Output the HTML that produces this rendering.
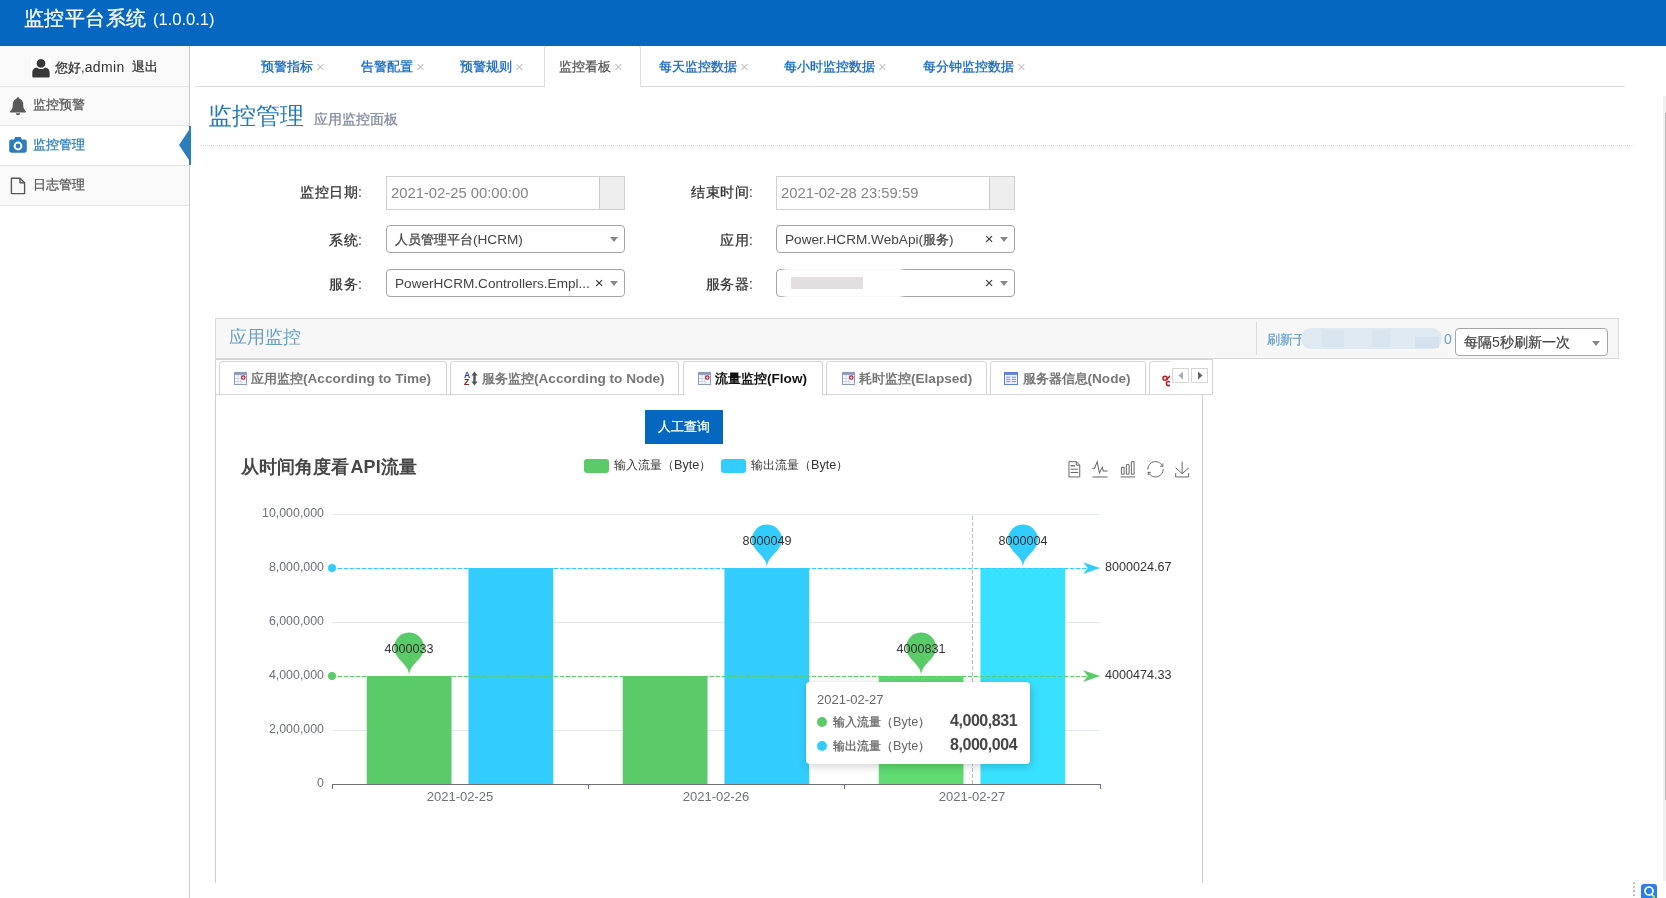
<!DOCTYPE html>
<html lang="zh">
<head>
<meta charset="utf-8">
<title>监控平台系统</title>
<style>
*{box-sizing:border-box;margin:0;padding:0}
html,body{width:1666px;height:898px;overflow:hidden;background:#fff}
body{font-family:"Liberation Sans",sans-serif;font-size:13px;color:#393939;position:relative}
.abs{position:absolute}
.w{display:inline-block;white-space:nowrap;overflow:visible;text-align:justify;text-align-last:justify;text-justify:inter-character;-webkit-text-stroke:.28px currentColor}
.t{position:absolute;white-space:nowrap;line-height:1}
/* header */
#navbar{left:0;top:0;width:1666px;height:46px;background:#0667c1;z-index:5}
#brand{z-index:6}
#brand{left:24px;top:7px;font-size:20px;color:#fff;line-height:22px}
#brand small{font-size:16.5px}
/* sidebar */
#sidebar{left:0;top:46px;width:190px;height:852px;border-right:1px solid #ccc;background:#fff}
.srow{position:absolute;left:0;width:189px;background:#f9f9f9;border-bottom:1px solid #e5e5e5}
.srow.act{background:#fff}
.mtxt{position:absolute;left:33px;font-size:13px;line-height:16px;color:#585858;white-space:nowrap}
/* top tabs */
.toptab{position:absolute;top:57.5px;font-size:13px;line-height:16px;color:#1166c0;white-space:nowrap}
.toptab i{font-style:normal;color:#c4c4c4;font-size:15px;margin-left:3px;position:relative;top:1px}
</style>
</head>
<body>
<div id="root" style="position:absolute;left:0;top:0;width:1666px;height:898px;overflow:hidden;will-change:transform;">
<!-- ======= NAVBAR ======= -->
<div id="navbar" class="abs"></div>
<div id="brand" class="t"><span class="w" style="width:122px;letter-spacing:.45px">监控平台系统</span><span class="w" style="width:7px"></span><small>(1.0.0.1)</small></div>

<!-- ======= SIDEBAR ======= -->
<div id="sidebar" class="abs">
  <div class="srow" style="top:0;height:41px"></div>
  <div class="srow" style="top:41px;height:39px"></div>
  <div class="srow act" style="top:80px;height:40px"></div>
  <div class="srow" style="top:120px;height:40px"></div>
</div>
<!-- user row -->
<div class="abs" style="left:31px;top:58px;width:20px;height:20px;background:#fff"></div>
<svg class="abs" style="left:31px;top:58px" width="20" height="20" viewBox="0 0 20 20"><path d="M1.3,18 V14.6 C1.3,11.2 3.6,9.6 6,9.4 C8,11.4 12,11.4 14,9.4 C16.4,9.6 18.7,11.2 18.7,14.6 V18 C18.7,19 18.1,19.5 17.2,19.5 H2.8 C1.9,19.5 1.3,19 1.3,18Z" fill="#383838"/><circle cx="10" cy="5.4" r="4.7" fill="#383838" stroke="#fff" stroke-width=".7"/></svg>
<div class="t" style="left:55px;top:59px;font-size:13px;line-height:16px;color:#333"><span class="w" style="width:26px">您好</span>,<span style="font-size:14px;letter-spacing:.4px">admin</span></div>
<div class="t" style="left:132px;top:59px;font-size:13px;line-height:16px;color:#333"><span class="w" style="width:26px">退出</span></div>
<!-- menu 1 -->
<svg class="abs" style="left:9px;top:96px" width="18" height="20" viewBox="0 0 18 20"><path d="M9,1.2 C9.9,1.2 10.3,1.9 10.2,2.6 C13.2,3.4 14.2,6.2 14.2,9 C14.2,12.2 15.4,14 17,15.4 C17,16 16.6,16.4 16,16.4 H2 C1.4,16.4 1,16 1,15.4 C2.6,14 3.8,12.2 3.8,9 C3.8,6.2 4.8,3.4 7.8,2.6 C7.7,1.9 8.1,1.2 9,1.2Z M6.9,17.2 H11.1 C11.1,18.4 10.2,19.2 9,19.2 C7.8,19.2 6.9,18.4 6.9,17.2Z" fill="#585858"/></svg>
<div class="mtxt" style="top:97px"><span class="w" style="width:52px">监控预警</span></div>
<!-- menu 2 active -->
<svg class="abs" style="left:9px;top:136px" width="18" height="18" viewBox="0 0 18 18"><path d="M6.2,1 H11.8 L12.9,3.4 H15.6 C16.9,3.4 17.8,4.3 17.8,5.6 V14.6 C17.8,15.9 16.9,16.8 15.6,16.8 H2.4 C1.1,16.8 0.2,15.9 0.2,14.6 V5.6 C0.2,4.3 1.1,3.4 2.4,3.4 H5.1Z M9,5.6 A4.4,4.4 0 1 0 9,14.4 A4.4,4.4 0 1 0 9,5.6Z M9,7.6 A2.4,2.4 0 1 1 9,12.4 A2.4,2.4 0 1 1 9,7.6Z" fill="#2b7dbc" fill-rule="evenodd"/></svg>
<div class="mtxt" style="top:137px;color:#2b7dbc"><span class="w" style="width:52px">监控管理</span></div>
<div class="abs" style="left:189px;top:126px;width:2px;height:39px;background:#2b7dbc"></div>
<svg class="abs" style="left:179px;top:130px" width="10" height="30" viewBox="0 0 10 30"><path d="M10,0 L0,15 L10,30Z" fill="#2b7dbc"/></svg>
<!-- menu 3 -->
<svg class="abs" style="left:10px;top:177px" width="16" height="18" viewBox="0 0 16 18"><path d="M1.4,1.2 H10 L14.6,5.8 V16.6 H1.4Z M10,1.2 V5.8 H14.6" fill="none" stroke="#585858" stroke-width="1.4" stroke-linejoin="round"/></svg>
<div class="mtxt" style="top:177px"><span class="w" style="width:52px">日志管理</span></div>

<!-- ======= TOP TABS ======= -->
<div class="abs" style="left:195px;top:86px;width:1430px;height:1px;background:#ddd"></div>
<div class="abs" style="left:544px;top:45px;width:97px;height:42px;border:1px solid #ddd;border-bottom:none;border-radius:4px 4px 0 0;background:#fff"></div>
<div class="toptab" style="left:261px"><span class="w" style="width:52px">预警指标</span><i>×</i></div>
<div class="toptab" style="left:361px"><span class="w" style="width:52px">告警配置</span><i>×</i></div>
<div class="toptab" style="left:460px"><span class="w" style="width:52px">预警规则</span><i>×</i></div>
<div class="toptab" style="left:559px;color:#555"><span class="w" style="width:52px">监控看板</span><i>×</i></div>
<div class="toptab" style="left:659px"><span class="w" style="width:78px">每天监控数据</span><i>×</i></div>
<div class="toptab" style="left:784px"><span class="w" style="width:91px">每小时监控数据</span><i>×</i></div>
<div class="toptab" style="left:923px"><span class="w" style="width:91px">每分钟监控数据</span><i>×</i></div>

<!-- ======= PAGE HEADER ======= -->
<div class="t" style="left:208px;top:103px;font-size:24px;line-height:26px;color:#2679b5;font-weight:300"><span class="w" style="width:96px;-webkit-text-stroke:0">监控管理</span></div>
<div class="t" style="left:314px;top:111px;font-size:14px;line-height:16px;color:#8089a0"><span class="w" style="width:84px">应用监控面板</span></div>
<div class="abs" style="left:200px;top:145px;width:1434px;height:0;border-top:1px dotted #d8d8d8"></div>

<!-- ======= FORM ======= -->
<style>
.lbl{margin-left:-1px;letter-spacing:0;position:absolute;font-size:14px;line-height:16px;color:#333;white-space:nowrap;text-align:right;width:120px}
.dinp{position:absolute;top:176px;width:239px;height:34px;border:1px solid #d0d0d0;background:#fff}
.dinp b{position:absolute;right:0;top:0;width:25px;height:32px;background:#eee;border-left:1px solid #ccc}
.dinp>span{position:absolute;left:4px;top:8px;font-size:14.8px;line-height:16px;color:#858585;white-space:nowrap;font-weight:normal}
.sel{position:absolute;width:239px;height:28px;border:1px solid #a4a4a4;border-radius:4px;background:#fff}
.sel>span{position:absolute;left:8px;top:6px;font-size:13px;line-height:15px;color:#444;white-space:nowrap}
.sel u{position:absolute;right:6px;top:11px;width:0;height:0;border-style:solid;border-width:5px 4px 0 4px;border-color:#888 transparent transparent transparent}
.sel em{position:absolute;right:20.5px;top:5px;font-style:normal;font-weight:normal;font-size:15px;line-height:16px;color:#333}
</style>
<div class="lbl" style="left:243px;top:184px"><span class="w" style="width:58.0px">监控日期</span>:</div>
<div class="dinp" style="left:386px"><span>2021-02-25 00:00:00</span><b></b></div>
<div class="lbl" style="left:634px;top:184px"><span class="w" style="width:58.0px">结束时间</span>:</div>
<div class="dinp" style="left:776px"><span>2021-02-28 23:59:59</span><b></b></div>

<div class="lbl" style="left:243px;top:232px"><span class="w" style="width:29.0px">系统</span>:</div>
<div class="sel" style="left:386px;top:225px"><span><span class="w" style="width:78px">人员管理平台</span><span style="font-size:13.6px">(HCRM)</span></span><u></u></div>
<div class="lbl" style="left:634px;top:232px"><span class="w" style="width:29.0px">应用</span>:</div>
<div class="sel" style="left:776px;top:225px"><span style="font-size:13.6px">Power.HCRM.WebApi(<span class="w" style="font-size:13px;width:26px">服务</span>)</span><em>×</em><u></u></div>

<div class="lbl" style="left:243px;top:276px"><span class="w" style="width:29.0px">服务</span>:</div>
<div class="sel" style="left:386px;top:269px"><span style="font-size:13.6px">PowerHCRM.Controllers.Empl...</span><em>×</em><u></u></div>
<div class="lbl" style="left:634px;top:276px"><span class="w" style="width:43.5px">服务器</span>:</div>
<div class="sel" style="left:776px;top:269px"><em>×</em><u></u></div>
<!-- blurred/redacted server name -->
<div class="abs" style="left:779px;top:266px;width:128px;height:34px;background:#fff;border-radius:14px;opacity:.93;filter:blur(1.5px)"></div>
<div class="abs" style="left:791px;top:277px;width:72px;height:12px;background:#e2dfe0;filter:blur(.6px)"></div>

<!-- ======= PANEL (widget box) ======= -->
<style>
.etab{position:absolute;top:361px;height:34px;border:1px solid #d4d4d4;border-bottom:1px solid #d4d4d4;background:#fff;border-radius:3px 3px 0 0}
.etab.on{border-bottom-color:#fff;height:35px}
.etab .tx{position:absolute;top:9px;font-size:13px;line-height:16px;font-weight:bold;color:#777;white-space:nowrap}
.etab .tx span.l{font-size:13.6px}
.etab.on .tx{color:#111}
.etab .w{-webkit-text-stroke:0}
.etab svg{position:absolute;top:10px}
</style>
<div class="abs" style="left:215px;top:318px;width:1404px;height:41px;border:1px solid #d9d9d9;background:#f7f7f7"></div>
<div class="t" style="left:229px;top:327px;font-size:18px;line-height:20px;color:#669fc7;font-weight:300"><span class="w" style="width:72px;-webkit-text-stroke:0">应用监控</span></div>
<div class="abs" style="left:1256px;top:322px;width:1px;height:33px;background:#dcdcdc"></div>
<div class="t" style="left:1267px;top:332px;font-size:13px;line-height:16px;color:#6aa3d0"><span class="w" style="width:39px">刷新于</span></div>
<div class="abs" style="left:1301px;top:328px;width:141px;height:21px;background:#dfe9f1;border-radius:10px;filter:blur(.7px)"></div>
<div class="abs" style="left:1322px;top:330px;width:22px;height:17px;background:#d9e5ef;filter:blur(.7px)"></div>
<div class="abs" style="left:1372px;top:330px;width:18px;height:17px;background:#d9e5ef;filter:blur(.7px)"></div>
<div class="abs" style="left:1415px;top:337px;width:24px;height:11px;background:#d5e2ed;filter:blur(.7px)"></div>
<div class="t" style="left:1444px;top:331px;font-size:14px;line-height:16px;color:#6aa3d0">0</div>
<div class="sel" style="left:1455px;top:328px;width:153px"><span style="font-size:14px;top:6px"><span class="w" style="width:28px">每隔</span>5<span class="w" style="width:70px">秒刷新一次</span></span><u style="right:7px;top:12px"></u></div>

<!-- easyui tabs header -->
<div class="abs" style="left:215px;top:359px;width:998px;height:36px;border:1px solid #d4d4d4;background:#fff"></div>
<div class="etab" style="left:219px;width:228px">
  <svg style="left:14px" width="13" height="13" viewBox="0 0 13 13"><rect x=".5" y=".5" width="12" height="12" fill="#f4f6fb" stroke="#8a9bc0"/><rect x=".5" y=".5" width="12" height="2.4" fill="#8a9bc0"/><path d="M1,6.5H8M1,9.5H8M4,3V12M7,3V12" stroke="#c9cfdd" stroke-width=".8"/><circle cx="9.3" cy="5.6" r="1.7" fill="#fff" stroke="#a0142a" stroke-width="1.1"/></svg>
  <div class="tx" style="left:31px"><span class="w" style="width:52px">应用监控</span><span class="l">(According to Time)</span></div></div>
<div class="etab" style="left:450px;width:229px">
  <svg style="left:13px;top:9px" width="15" height="15" viewBox="0 0 15 15"><text x="0" y="6.6" font-family="Liberation Sans" font-weight="bold" font-size="8.6" fill="#1a3fae">A</text><text x="0" y="14" font-family="Liberation Sans" font-weight="bold" font-size="8.6" fill="#a01818">Z</text><path d="M10.5,.6 L13.6,4.4 H11.7 V10.6 H13.6 L10.5,14.4 L7.4,10.6 H9.3 V4.4 H7.4Z" fill="#555"/></svg>
  <div class="tx" style="left:31px"><span class="w" style="width:52px">服务监控</span><span class="l">(According to Node)</span></div></div>
<div class="etab on" style="left:683px;width:140px">
  <svg style="left:14px" width="13" height="13" viewBox="0 0 13 13"><rect x=".5" y=".5" width="12" height="12" fill="#f4f6fb" stroke="#8a9bc0"/><rect x=".5" y=".5" width="12" height="2.4" fill="#8a9bc0"/><path d="M1,6.5H8M1,9.5H8M4,3V12M7,3V12" stroke="#c9cfdd" stroke-width=".8"/><circle cx="9.3" cy="5.6" r="1.7" fill="#fff" stroke="#a0142a" stroke-width="1.1"/></svg>
  <div class="tx" style="left:31px"><span class="w" style="width:52px">流量监控</span><span class="l">(Flow)</span></div></div>
<div class="etab" style="left:826px;width:161px">
  <svg style="left:15px" width="13" height="13" viewBox="0 0 13 13"><rect x=".5" y=".5" width="12" height="12" fill="#f4f6fb" stroke="#8a9bc0"/><rect x=".5" y=".5" width="12" height="2.4" fill="#8a9bc0"/><path d="M1,6.5H8M1,9.5H8M4,3V12M7,3V12" stroke="#c9cfdd" stroke-width=".8"/><circle cx="9.3" cy="5.6" r="1.7" fill="#fff" stroke="#a0142a" stroke-width="1.1"/></svg>
  <div class="tx" style="left:32px"><span class="w" style="width:52px">耗时监控</span><span class="l">(Elapsed)</span></div></div>
<div class="etab" style="left:990px;width:156px">
  <svg style="left:13px" width="14" height="13" viewBox="0 0 14 13"><rect x=".5" y=".5" width="13" height="12" fill="#eef3fd" stroke="#5b83d6"/><rect x=".5" y=".5" width="13" height="2.4" fill="#5b83d6"/><path d="M2.2,5.2H6.4M7.8,5.2H12M2.2,7.4H6.4M7.8,7.4H12M2.2,9.6H6.4M7.8,9.6H12" stroke="#6f94de" stroke-width="1"/></svg>
  <div class="tx" style="left:31.5px"><span class="w" style="width:65px">服务器信息</span><span class="l">(Node)</span></div></div>
<div class="etab" style="left:1149px;width:40px">
  <svg style="left:12px;top:12px" width="12" height="13" viewBox="0 0 12 13"><circle cx="3" cy="4.2" r="2" fill="none" stroke="#c4161c" stroke-width="1.5"/><circle cx="6.6" cy="9.6" r="2.2" fill="none" stroke="#c4161c" stroke-width="1.5"/><path d="M4.4,5.8 L10,0" stroke="#c4161c" stroke-width="1.5"/></svg></div>
<!-- scroller -->
<div class="abs" style="left:1170px;top:360px;width:42px;height:34px;background:#fff"></div>
<div class="abs" style="left:1172px;top:368px;width:17px;height:15px;border:1px solid #d6d6d6;background:#fff"></div>
<div class="abs" style="left:1191px;top:368px;width:17px;height:15px;border:1px solid #d6d6d6;background:#fff"></div>
<svg class="abs" style="left:1172px;top:368px" width="36" height="15" viewBox="0 0 36 15"><path d="M11,3.6 L6.4,7.5 L11,11.4Z" fill="#a9adb8"/><path d="M26,3.6 L30.6,7.5 L26,11.4Z" fill="#666"/></svg>
<!-- panel body borders -->
<div class="abs" style="left:215px;top:395px;width:1px;height:488px;background:#cfcfcf"></div>
<div class="abs" style="left:1202px;top:395px;width:1px;height:488px;background:#cfcfcf"></div>
<!-- query button -->
<div class="abs" style="left:645px;top:410px;width:78px;height:34px;background:#0667c1"></div>
<div class="t" style="left:658px;top:419px;font-size:13px;line-height:16px;color:#fff"><span class="w" style="width:52px">人工查询</span></div>

<!-- ======= CHART (ECharts-like) ======= -->
<svg class="abs" style="left:0;top:0" width="1666" height="898" viewBox="0 0 1666 898" font-family="Liberation Sans, sans-serif" font-size="13" fill="#6e7079">
<text x="241" y="472.5" font-size="18" font-weight="bold" fill="#464646" letter-spacing=".12"><tspan textLength="108.6" lengthAdjust="spacing">从时间角度看</tspan><tspan x="350.5">API</tspan><tspan x="380.6" textLength="36.2" lengthAdjust="spacing">流量</tspan></text>
<rect x="584" y="459" width="25" height="14" rx="3" fill="#5bca68"/><text x="614" y="468.8" font-size="12" fill="#333"><tspan textLength="60" lengthAdjust="spacing">输入流量（</tspan><tspan x="674" font-size="12.6">Byte</tspan><tspan x="698.6">）</tspan></text>
<rect x="721" y="459" width="25" height="14" rx="3" fill="#33ccff"/><text x="751" y="468.8" font-size="12" fill="#333"><tspan textLength="60" lengthAdjust="spacing">输出流量（</tspan><tspan x="811" font-size="12.6">Byte</tspan><tspan x="835.6">）</tspan></text>
<path transform="translate(1065.81,461.10) scale(0.2732)" d="M17.5,17.3H33 M17.5,17.3H33 M45.4,29.5h-28 M11.5,2v56H51V14.8L38.4,2H11.5z M38.4,2.2v12.7H51 M45.4,41.7h-28" fill="none" stroke="#666" stroke-width="3.66"/><path transform="translate(1091.13,459.64) scale(0.2977)" d="M4.1,28.9h7.1l9.3-22l7.4,38l9.7-19.7l3,12.8h14.9M4.1,58h51.4" fill="none" stroke="#666" stroke-width="3.36"/><path transform="translate(1119.57,461.10) scale(0.2732)" d="M6.7,22.9h10V48h-10V22.9zM24.9,13h10v35h-10V13zM43.2,2h10v46h-10V2zM3.1,58h53.7" fill="none" stroke="#666" stroke-width="3.66"/><path transform="translate(1147.30,461.10) scale(0.2732)" d="M3.8,33.4 M47,18.9h9.8V8.7 M56.3,20.1 C52.1,9,40.5,0.6,26.8,2.1C12.6,3.7,1.6,16.2,2.1,30.6 M13,41.1H3.1v10.2 M3.7,39.9c4.2,11.1,15.8,19.5,29.5,18 c14.2-1.6,25.2-14.1,24.7-28.5" fill="none" stroke="#666" stroke-width="3.66"/><path transform="translate(1174.43,461.65) scale(0.2638)" d="M4.7,22.9L29.3,45.5L54.7,23.4M4.6,43.6L4.6,58L53.8,58L53.8,43.6M29.2,45.1L29.2,0" fill="none" stroke="#666" stroke-width="3.79"/>
<path d="M332,514.5H1100" stroke="#e0e6f1" stroke-width="1"/><path d="M332,568.5H1100" stroke="#e0e6f1" stroke-width="1"/><path d="M332,622.5H1100" stroke="#e0e6f1" stroke-width="1"/><path d="M332,676.5H1100" stroke="#e0e6f1" stroke-width="1"/><path d="M332,730.5H1100" stroke="#e0e6f1" stroke-width="1"/>
<text x="324" y="516.6" text-anchor="end" font-size="12.4">10,000,000</text><text x="324" y="570.6" text-anchor="end" font-size="12.4">8,000,000</text><text x="324" y="624.6" text-anchor="end" font-size="12.4">6,000,000</text><text x="324" y="678.6" text-anchor="end" font-size="12.4">4,000,000</text><text x="324" y="732.6" text-anchor="end" font-size="12.4">2,000,000</text><text x="324" y="786.6" text-anchor="end" font-size="12.4">0</text>
<rect x="366.75" y="676" width="84.75" height="108" fill="#5bca68"/><rect x="468.45" y="568" width="84.75" height="216" fill="#33ccff"/><rect x="622.75" y="676" width="84.75" height="108" fill="#5bca68"/><rect x="724.45" y="568" width="84.75" height="216" fill="#33ccff"/><rect x="878.75" y="676" width="84.75" height="108" fill="#5fdb71"/><rect x="980.45" y="568" width="84.75" height="216" fill="#38e1ff"/>
<path d="M332,784.5H1101" stroke="#6e7079"/><path d="M332.5,784V789" stroke="#6e7079"/><path d="M588.5,784V789" stroke="#6e7079"/><path d="M844.5,784V789" stroke="#6e7079"/><path d="M1100.5,784V789" stroke="#6e7079"/>
<text x="460" y="800.5" text-anchor="middle">2021-02-25</text><text x="716" y="800.5" text-anchor="middle">2021-02-26</text><text x="972" y="800.5" text-anchor="middle">2021-02-27</text>
<path d="M332,568.5H1088" stroke="#33ccff" stroke-width="1" stroke-dasharray="4,2"/><circle cx="332" cy="568" r="4" fill="#33ccff"/><path d="M1100,568.1 L1083.2,562.2 L1087.7,568.1 L1083.2,573.9Z" fill="#33ccff"/><path d="M332,676.5H1088" stroke="#5bca68" stroke-width="1" stroke-dasharray="4,2"/><circle cx="332" cy="676" r="4" fill="#5bca68"/><path d="M1100,676.1 L1083.2,670.2 L1087.7,676.1 L1083.2,681.9Z" fill="#5bca68"/>
<text x="1105" y="571" fill="#333" font-size="12.6">8000024.67</text><text x="1105" y="679" fill="#333" font-size="12.6">4000474.33</text>
<path transform="translate(409.1,676)" d="M-13.55,-22.14 A15,15 0 1,1 13.55,-22.14 C9.70,-14.01 0,-10.50 0,0 C0,-10.50 -9.70,-14.01 -13.55,-22.14Z" fill="#5bca68"/><text x="409.1" y="652.7" text-anchor="middle" fill="#333" font-size="12.6">4000033</text><path transform="translate(921.1,676)" d="M-13.55,-22.14 A15,15 0 1,1 13.55,-22.14 C9.70,-14.01 0,-10.50 0,0 C0,-10.50 -9.70,-14.01 -13.55,-22.14Z" fill="#5bca68"/><text x="921.1" y="652.7" text-anchor="middle" fill="#333" font-size="12.6">4000831</text><path transform="translate(766.9,568)" d="M-13.55,-22.14 A15,15 0 1,1 13.55,-22.14 C9.70,-14.01 0,-10.50 0,0 C0,-10.50 -9.70,-14.01 -13.55,-22.14Z" fill="#33ccff"/><text x="766.9" y="544.7" text-anchor="middle" fill="#333" font-size="12.6">8000049</text><path transform="translate(1022.9,568)" d="M-13.55,-22.14 A15,15 0 1,1 13.55,-22.14 C9.70,-14.01 0,-10.50 0,0 C0,-10.50 -9.70,-14.01 -13.55,-22.14Z" fill="#33ccff"/><text x="1022.9" y="544.7" text-anchor="middle" fill="#333" font-size="12.6">8000004</text>
<path d="M972.5,516V784" stroke="#b4b9c8" stroke-width="1" stroke-dasharray="4,2"/>
</svg>
<!-- tooltip -->
<div class="abs" style="left:806px;top:682px;width:224px;height:82px;background:#fff;border-radius:4px;box-shadow:1px 2px 10px rgba(0,0,0,.2)"></div>
<div class="t" style="left:817px;top:691.8px;font-size:13px;line-height:15px;color:#666">2021-02-27</div>
<div class="abs" style="left:817px;top:717px;width:10px;height:10px;border-radius:5px;background:#5bca68"></div>
<div class="t" style="left:833px;top:715.2px;font-size:12px;line-height:15px;color:#666"><span class="w" style="width:60px">输入流量（</span><span style="font-size:12.6px">Byte</span><span class="w" style="width:12px">）</span></div>
<div class="t" style="left:950px;top:711.8px;letter-spacing:-.45px;font-size:16px;line-height:18px;color:#464646;font-weight:bold">4,000,831</div>
<div class="abs" style="left:817px;top:741.2px;width:10px;height:10px;border-radius:5px;background:#33ccff"></div>
<div class="t" style="left:833px;top:739.4px;font-size:12px;line-height:15px;color:#666"><span class="w" style="width:60px">输出流量（</span><span style="font-size:12.6px">Byte</span><span class="w" style="width:12px">）</span></div>
<div class="t" style="left:950px;top:736px;letter-spacing:-.45px;font-size:16px;line-height:18px;color:#464646;font-weight:bold">8,000,004</div>

<!-- ======= MISC ======= -->
<div class="abs" style="left:1663px;top:96px;width:3px;height:785px;background:#f1f1f1"></div>
<div class="abs" style="left:1665px;top:113px;width:1px;height:687px;background:#b9b9b9"></div>
<svg class="abs" style="left:1630px;top:880px" width="30" height="18" viewBox="0 0 30 18"><path d="M3.2,3.5l1.6,-1M3.2,7.5l1.6,-1M3.2,11.6l1.6,-1M3.2,15.7l1.6,-1" stroke="#999" stroke-width="1.3"/><rect x="11" y="4" width="16" height="16" rx="3" fill="#2b7de9"/><circle cx="19" cy="11" r="4" fill="none" stroke="#fff" stroke-width="1.7"/><path d="M21.6,14l2,2.4" stroke="#fff" stroke-width="1.6"/><rect x="22.8" y="15.6" width="2.2" height="2.4" fill="#9be22a"/></svg>

</div>
</body>
</html>
